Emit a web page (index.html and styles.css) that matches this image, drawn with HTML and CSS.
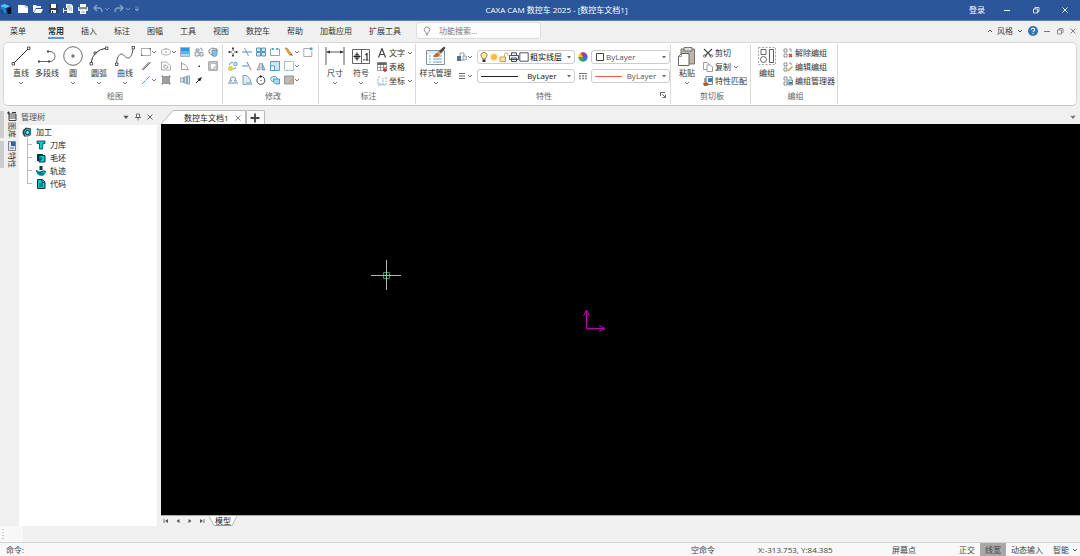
FILE: index.html
```html
<!DOCTYPE html>
<html lang="en">
<head>
<meta charset="utf-8">
<title>CAXA CAM 数控车 2025</title>
<link rel="stylesheet" href="styles.css">
</head>
<body>
<svg class="defs" aria-hidden="true">
  <symbol id="chev" viewBox="0 0 6 6"><path d="M1 2l2 2 2-2" fill="none" stroke="currentColor" stroke-width=".9"/></symbol>
  <symbol id="tri" viewBox="0 0 6 6"><path d="M1 2h4L3 4.500z" fill="currentColor"/></symbol>
  <symbol id="min" viewBox="0 0 8 8"><path d="M1 4.500h6" stroke="currentColor"/></symbol>
  <symbol id="restore" viewBox="0 0 8 8"><path d="M1.500 3h4v4h-4zM3 3V1.500h4v4H5.500" fill="none" stroke="currentColor" stroke-width=".8"/></symbol>
  <symbol id="close" viewBox="0 0 8 8"><path d="M1.500 1.500l5 5M6.500 1.500l-5 5" stroke="currentColor" stroke-width=".9"/></symbol>
</svg>

<header class="titlebar">
  <div class="quick">
    <svg class="i12" viewBox="0 0 12 12"><path d="M1 1h8l3 3v7H1z" fill="#174a86"/><path d="M1 2l4-1 5 2-4 2-5-1z" fill="#55c1ff"/><path d="M1 4l5 2v5l-2-1-1-3-2-1z" fill="#1e86d8"/><path d="M7 6l4-2v7H8z" fill="#06101f"/></svg>
    <button class="first" aria-label="新建"><svg class="i12" viewBox="0 0 12 12"><path d="M1 2h7l3 2v6H1z" fill="#fff"/><path d="M8 2v2h3" fill="none" stroke="#9fb4d6"/></svg></button>
    <button aria-label="打开"><svg class="i12" viewBox="0 0 12 12"><path d="M1 9V2h3l1 1h4v2H4L2 9z" fill="#eef3fa"/><path d="M2 10l2-4h7L9 10z" fill="#fff"/></svg></button>
    <button aria-label="保存"><svg class="i12" viewBox="0 0 12 12"><path d="M2 1h9v9H2z" fill="#333d4d"/><path d="M4 1h5v4H4z" fill="#fff"/><path d="M4 7h5v3H4z" fill="#e7eaf0"/><path d="M5 8h1v2H5z" fill="#333"/></svg></button>
    <button aria-label="另存为"><svg class="i12" viewBox="0 0 12 12"><path d="M4 1h5l2 2v7H4z" fill="#fff"/><path d="M5 3h4M5 5h5M7 7h3" stroke="#5d7fae" stroke-width=".7"/><path d="M1 5h5v5H1z" fill="#dfe8f5"/><path d="M2 5h3v2H2zM2 8h3v2H2z" fill="#40566f"/></svg></button>
    <button aria-label="打印"><svg class="i12" viewBox="0 0 12 12"><path d="M3 1h6v3H3z" fill="#fff"/><path d="M1 4h10v4H1z" fill="#d5dce6"/><path d="M2 5h8" stroke="#344"/><path d="M3 7h6v4H3z" fill="#fff"/><path d="M4 9h4" stroke="#6cb0c0"/></svg></button>
    <button class="dim" aria-label="撤销"><svg class="i12" viewBox="0 0 12 12"><path d="M5 2L2 5l3 3M2 5h5q3 0 3 4" fill="none" stroke="currentColor" stroke-width="1.500"/></svg><svg class="i6"><use href="#chev"/></svg></button>
    <button class="dim" aria-label="重做"><svg class="i12" viewBox="0 0 12 12"><path d="M7 2l3 3-3 3M10 5H5Q2 5 2 9" fill="none" stroke="currentColor" stroke-width="1.500"/></svg><svg class="i6"><use href="#chev"/></svg></button>
    <button class="dim" aria-label="自定义"><svg class="i6" viewBox="0 0 6 6"><path d="M1 1h4M1 3h4L3 5z" fill="currentColor" stroke="currentColor" stroke-width=".6"/></svg></button>
  </div>
  <h1>CAXA CAM 数控车 2025 - [数控车文档1]</h1>
  <div class="window-buttons">
    <button>登录</button>
    <button aria-label="最小化"><svg class="i8"><use href="#min"/></svg></button>
    <button aria-label="还原"><svg class="i8"><use href="#restore"/></svg></button>
    <button aria-label="关闭"><svg class="i8"><use href="#close"/></svg></button>
  </div>
</header>

<nav class="menubar">
  <button class="menu-root">菜单</button>
  <div class="tabs">
    <button class="on">常用</button><button>插入</button><button>标注</button><button>图幅</button><button>工具</button><button>视图</button><button>数控车</button><button>帮助</button><button>加载应用</button><button>扩展工具</button>
  </div>
  <label class="search">
    <svg class="i10" viewBox="0 0 10 10"><path d="M4 7.500Q4 6.500 3 5.500a2.700 2.700 0 1 1 4 0Q6 6.500 6 7.500zM4 9h2" fill="none" stroke="#666" stroke-width=".7"/></svg>
    <input type="text" placeholder="功能搜索..." aria-label="功能搜索">
  </label>
  <div class="doc-buttons">
    <button class="style-btn"><svg class="i6" viewBox="0 0 6 6"><path d="M1 4l2-2 2 2" fill="none" stroke="currentColor" stroke-width=".8"/></svg><span>风格</span><svg class="i6"><use href="#chev"/></svg></button>
    <button aria-label="帮助"><svg class="i10" viewBox="0 0 10 10"><circle cx="5" cy="5" r="5" fill="#3273b4"/><path d="M3.400 3.800a1.600 1.500 0 1 1 2.400 1.200Q5 5.400 5 6.200M5 7.200v1" fill="none" stroke="#fff" stroke-width="1.100"/></svg></button>
    <button aria-label="最小化文档"><svg class="i8"><use href="#min"/></svg></button>
    <button aria-label="还原文档"><svg class="i8"><use href="#restore"/></svg></button>
    <button aria-label="关闭文档"><svg class="i8"><use href="#close"/></svg></button>
  </div>
</nav>

<section class="ribbon">
  <section class="group g-draw">
    <div class="tools">
      <button class="big"><svg class="i20" viewBox="0 0 20 20"><path d="M2 18L18 2" stroke="#333"/><path d="M1 16.500h2.500V19H1zM16.500 1H19v2.500h-2.500z" fill="#fff" stroke="#333" stroke-width=".8"/></svg><span>直线</span><svg class="i6"><use href="#chev"/></svg></button>
      <button class="big"><svg class="i20" viewBox="0 0 20 20"><path d="M2 15.500h11a5 5 0 0 0 0-10h-3" fill="none" stroke="#555" stroke-width=".9"/><path d="M1 14.500h2v2H1zM11 14.500h2v2h-2zM10 4.500h2v2h-2z" fill="#444"/></svg><span>多段线</span></button>
      <button class="big"><svg class="i20" viewBox="0 0 20 20"><circle cx="10" cy="10" r="9.300" fill="none" stroke="#555" stroke-width=".9"/><path d="M9 9h2v2H9z" fill="#fff" stroke="#333" stroke-width=".8"/></svg><span>圆</span><svg class="i6"><use href="#chev"/></svg></button>
      <button class="big"><svg class="i20" viewBox="0 0 20 20"><path d="M2 18Q3 4 18 2" fill="none" stroke="#333"/><path d="M1 16.500h2.500V19H1zM16.500 1H19v2.500h-2.500zM5 6h2v2H5z" fill="#fff" stroke="#333" stroke-width=".8"/></svg><span>圆弧</span><svg class="i6"><use href="#chev"/></svg></button>
      <button class="big"><svg class="i20" viewBox="0 0 20 20"><path d="M1.500 18C2 9 6 6 9 9.500s8 5 9-7.500" fill="none" stroke="#444" stroke-width=".9"/><path d="M.5 17H3v2.500H.5zM17 .5h2.500V3H17z" fill="#fff" stroke="#333" stroke-width=".8"/></svg><span>曲线</span><svg class="i6"><use href="#chev"/></svg></button>
      <div class="grid grid-draw">
        <button aria-label="矩形"><svg class="i10" viewBox="0 0 10 10"><path d="M.5 1.500h9v7h-9z" fill="none" stroke="#888" stroke-width=".7"/><path d="M0 7.500h1.500V9H0zM8.500 1H10v1.500H8.500z" fill="#666"/></svg><svg class="i6"><use href="#chev"/></svg></button>
        <button aria-label="椭圆"><svg class="i10" viewBox="0 0 10 10"><ellipse cx="5" cy="5" rx="4.500" ry="3" fill="none" stroke="#888" stroke-width=".7"/><path d="M4.300 4.300h1.400v1.400H4.300zM4.300 1.300h1.400v1H4.300z" fill="#999"/></svg><svg class="i6"><use href="#chev"/></svg></button>
        <button aria-label="填充"><svg class="i10" viewBox="0 0 10 10"><path d="M1 1h8v3H1z" fill="#2f93e0"/><path d="M1 4h8v3H1z" fill="#5db2f0"/><path d="M1 7h8v2H1z" fill="#a6d8fb"/><path d="M.5.500h9v9h-9z" fill="none" stroke="#777" stroke-width=".6"/></svg></button>
        <button aria-label="块"><svg class="i10" viewBox="0 0 10 10"><path d="M1 5h4v4H1zM6 5l3 1v3H6zM2 2h3v2H2zM6 1l2 1v2" fill="#e8eff5" stroke="#78838d" stroke-width=".8"/></svg></button>
        <button aria-label="圆角多边形"><svg class="i10" viewBox="0 0 10 10"><path d="M1 3l3-2 5 1v3L5 9 1 6z" fill="#eee" stroke="#666" stroke-width=".7"/><path d="M4 3h5v4a2.500 2.500 0 0 1-5 0z" fill="#80bfe8" stroke="#4683a9" stroke-width=".6"/></svg></button>
        <button aria-label="平行线"><svg class="i10" viewBox="0 0 10 10"><path d="M1 8.500L8.500 1M2 9l7.500-7.500" stroke="#555" stroke-width=".9"/></svg></button>
        <button aria-label="等距线"><svg class="i10" viewBox="0 0 10 10"><path d="M.5 1h5l4 4v4h-9zM3 7V4h2l2 2v1z" fill="none" stroke="#888" stroke-width=".7"/></svg></button>
        <button aria-label="公式曲线"><svg class="i10" viewBox="0 0 10 10"><path d="M1.500 1v7.500H9M1.500 3Q6 2 8 8" fill="none" stroke="#777" stroke-width=".7"/></svg></button>
        <button aria-label="点"><svg class="i10" viewBox="0 0 10 10"><path d="M4.500 4.500H6V6H4.500z" fill="#333"/></svg></button>
        <button aria-label="轮廓"><svg class="i10" viewBox="0 0 10 10"><path d="M.8.800h8.400v8.400H.8z" fill="#e7e7e7" stroke="#888"/><path d="M2.500 2.500h5.500V6H6v2H2.500z" fill="#fff" stroke="#999" stroke-width=".6"/></svg></button>
        <button aria-label="中心线"><svg class="i10" viewBox="0 0 10 10"><path d="M1 9l8-8" stroke="#29a8dc" stroke-dasharray="5 1"/></svg><svg class="i6"><use href="#chev"/></svg></button>
        <button aria-label="剖面线"><svg class="i10" viewBox="0 0 10 10"><path d="M1.500 1.500h7v7h-7z" fill="#9aa0a6"/><path d="M0 1.500h10M0 8.500h10M1.500 0v10M8.500 0v10" stroke="#777" stroke-width=".6"/></svg></button>
        <button aria-label="孔轴"><svg class="i10" viewBox="0 0 10 10"><path d="M0 3h4v4H0zM4 2h3v6H4zM7 1h2.500v8H7z" fill="#d6e7f3" stroke="#667f91" stroke-width=".7"/></svg></button>
        <button aria-label="箭头"><svg class="i10" viewBox="0 0 10 10"><path d="M2 8l3-3" stroke="#222"/><path d="M8 2L3.500 4l2.500 2.500z" fill="#222"/></svg></button>
      </div>
    </div>
    <h2>绘图</h2>
  </section>

  <section class="group g-edit">
    <div class="tools">
      <div class="grid grid-edit">
        <button aria-label="移动"><svg class="i10" viewBox="0 0 10 10"><path d="M5 0v4M5 6v4M0 5h4M6 5h4M4 1.500h2M4 8.500h2M1.500 4v2M8.500 4v2" stroke="#333" stroke-width=".9"/></svg></button>
        <button aria-label="裁剪"><svg class="i10" viewBox="0 0 10 10"><path d="M0 5h10" stroke="#3697d5"/><path d="M2.500 1l4 8" stroke="#777" stroke-width=".8"/></svg></button>
        <button aria-label="阵列"><svg class="i10" viewBox="0 0 10 10"><path d="M.5 1h4v3.500h-4zM5.500 1h4v3.500h-4zM.5 5.500h4V9h-4zM5.500 5.500h4V9h-4z" fill="#cfeafa" stroke="#347ba8" stroke-width=".8"/></svg></button>
        <button aria-label="打断"><svg class="i10" viewBox="0 0 10 10"><path d="M3 2H.5v6.500h9V2H7" fill="none" stroke="#777" stroke-width=".7"/><path d="M2 2h2M6 2h2" stroke="#2c9bd8" stroke-width="1.500"/></svg></button>
        <button aria-label="删除"><svg class="i10" viewBox="0 0 10 10"><path d="M1 1l2 0 4.500 5.500-2 1.500z" fill="#eca53a" stroke="#a46b22" stroke-width=".5"/><path d="M5.500 8l2-1.500L9 9z" fill="#c43b3b"/></svg><svg class="i6"><use href="#chev"/></svg></button>
        <button aria-label="编辑"><svg class="i10" viewBox="0 0 10 10"><path d="M7 1.500H.800v8h8V4" fill="none" stroke="#888" stroke-width=".7"/><path d="M7 .500h2.500V3H7z" fill="#4b9fd3"/></svg></button>
        <button aria-label="平移复制"><svg class="i10" viewBox="0 0 10 10"><circle cx="2.500" cy="7.500" r="1.900" fill="#ffe600" stroke="#9b8b00" stroke-width=".5"/><circle cx="7.500" cy="3" r="1.800" fill="#d0e8f5" stroke="#357fae" stroke-width=".7"/><path d="M1 4Q2 1 5 1.500M5 8l3-1" fill="none" stroke="#2384c0" stroke-width=".8"/></svg></button>
        <button aria-label="延伸"><svg class="i10" viewBox="0 0 10 10"><path d="M0 5h6" stroke="#3697d5"/><path d="M5 1l4 8" stroke="#555" stroke-width=".8"/></svg></button>
        <button aria-label="镜像"><svg class="i10" viewBox="0 0 10 10"><path d="M4 2v7H1z" fill="#ddd" stroke="#777" stroke-width=".6"/><path d="M6 2v7h3z" fill="#8ecbee" stroke="#43718d" stroke-width=".6"/></svg></button>
        <button aria-label="缩放"><svg class="i10" viewBox="0 0 10 10"><path d="M.5.500h9v9h-9z" fill="#c6e8fa" stroke="#3a86b5" stroke-width=".8"/><path d="M.5 5h4v4.500h-4z" fill="#fff" stroke="#3a86b5" stroke-width=".8"/></svg></button>
        <button aria-label="拉伸"><svg class="i10" viewBox="0 0 10 10"><path d="M.5.500h9v9h-9z" fill="none" stroke="#5b9fc5" stroke-width=".8" stroke-dasharray="2 .6"/></svg><svg class="i6"><use href="#chev"/></svg></button>
        <span></span>
        <button aria-label="等距"><svg class="i10" viewBox="0 0 10 10"><path d="M0 8h10M1 6h2.500Q1 2 5 2t1.500 4H9" fill="none" stroke="#4f7f9e" stroke-width=".9"/></svg></button>
        <button aria-label="倒角"><svg class="i10" viewBox="0 0 10 10"><path d="M1 .5h4L8.500 5v4.500H1z" fill="#dcebf4" stroke="#678" stroke-width=".7"/><path d="M4 7h6v3H4z" fill="#8ec9ea"/></svg></button>
        <button aria-label="旋转"><svg class="i10" viewBox="0 0 10 10"><path d="M4 1.500a4 4 0 1 0 3 .5" fill="none" stroke="#333" stroke-width=".9"/><path d="M4 0l3 1.500L4 3zM4.500 5h1v1h-1z" fill="#333"/></svg></button>
        <button aria-label="组合"><svg class="i10" viewBox="0 0 10 10"><path d="M.5 4.500q0-3 3-3h2l2 2v3h-5z" fill="#d9effa" stroke="#3a86b5" stroke-width=".8"/><path d="M3.500 4h6v5h-4l-2-2z" fill="#a9d9f3" stroke="#3a86b5" stroke-width=".8"/></svg></button>
        <button aria-label="特性编辑"><svg class="i10" viewBox="0 0 10 10"><path d="M.5 1h9v8h-9z" fill="#b9bdc0" stroke="#777" stroke-width=".7"/><path d="M5 7.500l4.500-4.500" stroke="#dca54a" stroke-width="1.200"/></svg><svg class="i6"><use href="#chev"/></svg></button>
      </div>
    </div>
    <h2>修改</h2>
  </section>

  <section class="group g-dim">
    <div class="tools">
      <button class="big"><svg class="i20" viewBox="0 0 20 20"><path d="M1 1v18M19 1v18M2 6h16" stroke="#444" stroke-width=".9"/><path d="M1 6l4-1.500v3zM19 6l-4-1.500v3z" fill="#333"/></svg><span>尺寸</span><svg class="i6"><use href="#chev"/></svg></button>
      <button class="big"><svg class="i20" viewBox="0 0 20 20"><path d="M1.500 3.500h17v14h-17zM10.500 3.500v14" fill="#fff" stroke="#555" stroke-width=".9"/><circle cx="6" cy="10.500" r="2.300" fill="none" stroke="#333"/><path d="M6 6.500v8M2.500 10.500h7M13 13v1.500M16 7v7.500M16 7.500L14.500 9M14.500 14h3" stroke="#222" stroke-width="1.100"/></svg><span>符号</span><svg class="i6"><use href="#chev"/></svg></button>
      <div class="stack">
        <button><svg class="i10" viewBox="0 0 10 10"><path d="M1.500 9.500L5 .500l3.500 9M3 6.500h4" fill="none" stroke="#444" stroke-width="1.200"/></svg><span>文字</span><svg class="i6"><use href="#chev"/></svg></button>
        <button><svg class="i10" viewBox="0 0 10 10"><path d="M.5.500h9v8h-9zM.5 5.500h9M3.500 2v6M6.500 2v6" fill="none" stroke="#777" stroke-width=".7"/><path d="M.5.500h9v2.500h-9z" fill="#666"/><path d="M6 8h4M8 6v4" stroke="#cf2638" stroke-width="1.400"/></svg><span>表格</span></button>
        <button><svg class="i10" viewBox="0 0 10 10"><path d="M1 3v6h8V5M3 9V6M6 9V2M9 1v2M1 1h2" fill="none" stroke="#6b9ab8" stroke-width=".8" stroke-dasharray="2 .8"/></svg><span>坐标</span><svg class="i6"><use href="#chev"/></svg></button>
      </div>
    </div>
    <h2>标注</h2>
  </section>

  <section class="group g-prop">
    <div class="tools">
      <button class="big wide"><svg class="i20" viewBox="0 0 20 20"><path d="M.5 4.500h18v14H.5z" fill="#fff" stroke="#7b94a8"/><path d="M1 5h17v3H1z" fill="#dfe9f1"/><path d="M3 10h2M7 10h9M3 13h2M7 13h9M3 16h2M7 16h9" stroke="#6d9fc2"/><path d="M11 7l7-6.500 1.500 1.500L13.500 9z" fill="#4a4440"/><path d="M11 7l2-2 2.500 2.500L13.500 9z" fill="#d8a060"/><path d="M7.500 11q1-4 4-4l2 2q-1.500 3-6 2z" fill="#c4671d"/></svg><span>样式管理</span><svg class="i6"><use href="#chev"/></svg></button>
      <div class="props">
        <button aria-label="图层"><svg class="i10" viewBox="0 0 10 10"><path d="M3 1h4v7H3z" fill="#fff" stroke="#777" stroke-width=".7"/><path d="M0 4h4v5H0z" fill="#54758e"/><path d="M6 4h3.500v4H6z" fill="#d9e6ee" stroke="#789" stroke-width=".6"/></svg><svg class="i6"><use href="#chev"/></svg></button>
        <label class="combo">
          <svg class="i10" viewBox="0 0 10 10"><path d="M3.500 7Q3.500 6 2.500 5a3 3 0 1 1 5 0Q6.500 6 6.500 7z" fill="#ffe9a0" stroke="#6b5820" stroke-width=".7"/><path d="M3.500 7.500h3V10h-3z" fill="#333"/></svg>
          <svg class="i10" viewBox="0 0 10 10"><circle cx="5" cy="5" r="3" fill="#f9b93c"/><circle cx="5" cy="5" r="4" fill="none" stroke="#fbd48a" stroke-dasharray="1.500 1"/></svg>
          <svg class="i10" viewBox="0 0 10 10"><path d="M1 5h5.500v4.500H1z" fill="#fbe1a3" stroke="#c08b2c" stroke-width=".8"/><path d="M5.500 5V2.500a1.700 1.700 0 0 1 3.400 0V4" fill="none" stroke="#c9a04d" stroke-width=".9"/></svg>
          <svg class="i10" viewBox="0 0 10 10"><path d="M2.500 3V.800h5V3M.5 3.500h9v4h-9zM2.500 6h5v3.500h-5z" fill="#f2f4f8" stroke="#333c50" stroke-width=".9"/></svg>
          <svg class="i10" viewBox="0 0 10 10"><path d="M.8.800h8.400v8.400H.8z" fill="#fff" stroke="#444" stroke-width=".9"/></svg>
          <select aria-label="图层"><option>粗实线层</option></select>
          <svg class="i6"><use href="#tri"/></svg>
        </label>
        <svg class="i10" viewBox="0 0 10 10"><path d="M5 5V.300A4.700 4.700 0 0 1 9.700 5z" fill="#8a3fd0"/><path d="M5 5h4.700A4.700 4.700 0 0 1 5 9.700z" fill="#2f7be5"/><path d="M5 5v4.700A4.700 4.700 0 0 1 .3 5z" fill="#36b04a"/><path d="M5 5H.300A4.700 4.700 0 0 1 2.500 1z" fill="#f6c11e"/><path d="M5 5L2.500 1A4.700 4.700 0 0 1 6 .400z" fill="#e3312b"/></svg>
        <label class="combo light">
          <svg class="i10" viewBox="0 0 10 10"><path d="M1.500 1.500h7v7h-7z" fill="#fff" stroke="#444"/></svg>
          <select aria-label="颜色"><option>ByLayer</option></select>
          <svg class="i6"><use href="#tri"/></svg>
        </label>
        <button aria-label="线型"><svg class="i10" viewBox="0 0 10 10"><path d="M2 2.500h6M2 5h6M2 7.500h6" stroke="#555" stroke-width=".9"/></svg><svg class="i6"><use href="#chev"/></svg></button>
        <label class="combo">
          <span class="line"></span>
          <select aria-label="线型"><option>ByLayer</option></select>
          <svg class="i6"><use href="#tri"/></svg>
        </label>
        <svg class="i10" viewBox="0 0 10 10"><path d="M1 2.500h8" stroke="#777"/><path d="M1 5h8M1 7.500h8" stroke="#888" stroke-width="1.500" stroke-dasharray="2 1"/></svg>
        <label class="combo light">
          <span class="line red"></span>
          <select aria-label="线宽"><option>ByLayer</option></select>
          <svg class="i6"><use href="#tri"/></svg>
        </label>
      </div>
    </div>
    <h2>特性</h2>
    <button class="launcher" aria-label="特性设置"><svg class="i6" viewBox="0 0 6 6"><path d="M.5 4V.500H5M2 2l3 3M5.500 2.500v3h-3" fill="none" stroke="#444" stroke-width=".8"/></svg></button>
  </section>

  <section class="group g-clip">
    <div class="tools">
      <button class="big"><svg class="i20" viewBox="0 0 20 20"><path d="M4 3h13.500v15H4z" fill="#c0b5a7" stroke="#666" stroke-width=".9"/><path d="M7 1.500h8V5H7z" fill="#ddd" stroke="#666" stroke-width=".9"/><path d="M1.500 10.500L4.500 7.500H12v12H1.500z" fill="#fff" stroke="#555" stroke-width=".9"/><path d="M1.500 10.500h3v-3" fill="none" stroke="#666" stroke-width=".7"/></svg><span>粘贴</span><svg class="i6"><use href="#chev"/></svg></button>
      <div class="stack">
        <button><svg class="i10" viewBox="0 0 10 10"><path d="M1 1l7 7M9 1L2 8" stroke="#444" stroke-width="1.100"/><circle cx="1.800" cy="8" r="1.300" fill="none" stroke="#555" stroke-width=".8"/><circle cx="8.200" cy="8" r="1.300" fill="none" stroke="#555" stroke-width=".8"/></svg><span>剪切</span></button>
        <button><svg class="i10" viewBox="0 0 10 10"><path d="M.5.500h4L6 2v5.500H.500z" fill="#fff" stroke="#777" stroke-width=".7"/><path d="M4 3h3.500L9.500 5v4.500H4z" fill="#fff" stroke="#777" stroke-width=".7"/></svg><span>复制</span><svg class="i6"><use href="#chev"/></svg></button>
        <button><svg class="i10" viewBox="0 0 10 10"><path d="M3 .500h6.500v8H3z" fill="#eaf3fa" stroke="#567" stroke-width=".8"/><path d="M5 2h4v4H5z" fill="#3d87bd"/><path d="M0 7l3-1 3 2-2 2H1z" fill="#b45b24"/><path d="M1 3h2M1 5h2" stroke="#555"/></svg><span>特性匹配</span></button>
      </div>
    </div>
    <h2>剪切板</h2>
  </section>

  <section class="group g-group">
    <div class="tools">
      <button class="big"><svg class="i20" viewBox="0 0 20 20"><path d="M1.500 1.500h17v17h-17z" fill="none" stroke="#999" stroke-width=".9" stroke-dasharray="2 1.500"/><path d="M4 3.500h5v5H4zM12.500 3.500h4v13h-4z" fill="#fff" stroke="#555" stroke-width=".9"/><circle cx="6.500" cy="13.500" r="3" fill="#fff" stroke="#555" stroke-width=".9"/></svg><span>编组</span></button>
      <div class="stack">
        <button><svg class="i10" viewBox="0 0 10 10"><path d="M1 1h3v3H1zM1 6h3v3H1zM6 1h2v3" fill="none" stroke="#777" stroke-width=".8"/><path d="M6 6l3 3M9 6L6 9" stroke="#cc3030" stroke-width="1.200"/></svg><span>解除编组</span></button>
        <button><svg class="i10" viewBox="0 0 10 10"><path d="M1 1h3v3H1zM1 6h3v3H1zM6 1h2v2" fill="none" stroke="#777" stroke-width=".8"/><path d="M5 9l4.500-4.500" stroke="#d89a38" stroke-width="1.500"/></svg><span>编辑编组</span></button>
        <button><svg class="i10" viewBox="0 0 10 10"><path d="M1 1h3v3H1zM1 6h3v3H1zM6 1h2v2" fill="none" stroke="#777" stroke-width=".8"/><path d="M5 4h4.500v5H5z" fill="#d8ecf8" stroke="#467" stroke-width=".7"/><path d="M6 6h3v2H6z" fill="#3677a8"/></svg><span>编组管理器</span></button>
      </div>
    </div>
    <h2>编组</h2>
  </section>
</section>

<main class="work">
  <aside class="side-tabs">
    <button><svg class="i10" viewBox="0 0 10 10"><path d="M2 3h7v6.500H2zM2 5h7M2 7h7" fill="#fff" stroke="#444"/><path d="M0 2h3M1.500.500v3M5 1.500h4" stroke="#333"/></svg><span>图库</span></button>
    <button><svg class="i10" viewBox="0 0 10 10"><path d="M1.500.500h7v9h-7z" fill="#dfe8f2" stroke="#667" stroke-width=".8"/><path d="M4 1h4v4H4z" fill="#2b62a8"/><path d="M3 7h4" stroke="#667"/></svg><span>特性</span></button>
  </aside>
  <section class="panel">
    <header class="panel-head">
      <h2>管理树</h2>
      <button aria-label="菜单"><svg class="i8"><use href="#tri"/></svg></button>
      <button aria-label="固定"><svg class="i8" viewBox="0 0 8 8"><path d="M2.500 1h3v3.500h-3zM1 4.500h6M4 4.500v3" fill="none" stroke="#555" stroke-width=".8"/></svg></button>
      <button aria-label="关闭面板"><svg class="i8"><use href="#close"/></svg></button>
    </header>
    <div class="tree">
      <div class="root"><svg class="i10" viewBox="0 0 10 10"><path d="M1 3l3-2.500 5 1V8L6 9.500H2L.500 6z" fill="#263c40"/><path d="M2 4l3-2.500 3.500 1V7.500L6 9H3z" fill="#1fb9bd"/><circle cx="5.500" cy="5.500" r="2" fill="#7feaea" stroke="#123" stroke-width=".9"/></svg><span>加工</span></div>
      <ul>
        <li><svg class="i10" viewBox="0 0 10 10"><path d="M1 1h8v2.500H7L6.500 9h-3L3.500 3.500H1z" fill="#0cc" stroke="#134" stroke-width=".8"/></svg><span>刀库</span></li>
        <li><svg class="i10" viewBox="0 0 10 10"><path d="M1 1h6v7H1z" fill="#134"/><path d="M3 2.500h6V9H3z" fill="#0cc" stroke="#134"/><path d="M5 4v3H3" fill="none" stroke="#134"/></svg><span>毛坯</span></li>
        <li><svg class="i10" viewBox="0 0 10 10"><path d="M3.500 0h3v4h-3z" fill="#134"/><path d="M0 4l3 1h6l1 2-3 3H4L1 8z" fill="#0bb"/><path d="M0 4q2 5 5 2t5 0M3 8h5" fill="none" stroke="#134" stroke-width=".9"/></svg><span>轨迹</span></li>
        <li><svg class="i10" viewBox="0 0 10 10"><path d="M1.500.500h5l2.500 2.500v6.500H1.500z" fill="#0cc" stroke="#134"/><path d="M3 5h4M3 7h4M6 1v2.500h2.500" fill="none" stroke="#134" stroke-width=".9"/></svg><span>代码</span></li>
      </ul>
    </div>
  </section>
  <section class="document">
    <div class="doc-tabs">
      <svg class="slope" viewBox="0 0 14 14"><path d="M0 14L12 .500h2V14z" fill="#fff"/><path d="M0 14L12 .500h2" fill="none" stroke="#aaa" stroke-width=".8"/></svg>
      <div class="doc-tab"><button>数控车文档1</button><button class="x" aria-label="关闭标签"><svg class="i8"><use href="#close"/></svg></button></div>
      <button class="add" aria-label="新建标签"><svg class="i10" viewBox="0 0 10 10"><path d="M5 .500v9M.5 5h9" stroke="#444" stroke-width="1.800"/></svg></button>
      <button class="tab-list" aria-label="标签列表"><svg class="i8"><use href="#tri"/></svg></button>
    </div>
    <div class="canvas">
      <svg class="cursor" viewBox="0 0 30 30"><path d="M12.500 12.500h6v6h-6z" fill="none" stroke="#00a65a"/><path d="M0 15.500h30M15.500 0v30" stroke="#b5b5b5"/></svg>
      <svg class="axes" viewBox="0 0 24 24"><path d="M3.500 2v18.500H22M.5 8l3-6 3 6M16 17.500l6 3-6 3" fill="none" stroke="#c000c0"/></svg>
    </div>
    <div class="sheet-bar">
      <button aria-label="首页"><svg class="i6" viewBox="0 0 6 6"><path d="M5 1v4L2 3z" fill="#555"/><path d="M1 1v4" stroke="#555" stroke-width=".8"/></svg></button>
      <button aria-label="上一页"><svg class="i6" viewBox="0 0 6 6"><path d="M4.500 1v4L1.500 3z" fill="#555"/></svg></button>
      <button aria-label="下一页"><svg class="i6" viewBox="0 0 6 6"><path d="M1.500 1v4l3-2z" fill="#555"/></svg></button>
      <button aria-label="末页"><svg class="i6" viewBox="0 0 6 6"><path d="M1 1v4l3-2z" fill="#555"/><path d="M5 1v4" stroke="#555" stroke-width=".8"/></svg></button>
      <div class="sheet"><svg viewBox="0 0 6 10"><path d="M0 0h6v9.500H5z" fill="#fff"/><path d="M0 0l5 9.500h1" fill="none" stroke="#999" stroke-width=".7"/></svg><button>模型</button><svg viewBox="0 0 6 10"><path d="M6 0H0v9.500h1z" fill="#fff"/><path d="M6 0L1 9.500H0" fill="none" stroke="#999" stroke-width=".7"/></svg></div>
    </div>
  </section>
</main>

<div class="dock"><div class="handle"><svg viewBox="0 0 2 10"><path d="M1 0v10" stroke="#999" stroke-dasharray="1 2"/></svg></div></div>
<footer class="status">
  <label class="command">命令:<input type="text" aria-label="命令输入"></label>
  <span class="state">空命令</span>
  <span class="coords">X:-313.753, Y:84.385</span>
  <span class="snap">屏幕点</span>
  <button>正交</button>
  <button class="on">线宽</button>
  <button>动态输入</button>
  <button>智能 <svg class="i6"><use href="#chev"/></svg></button>
</footer>
</body>
</html>
```
FILE: styles.css
```css
* { box-sizing: border-box; }
body {
  margin: 0;
  min-height: 100vh;
  display: flex;
  flex-direction: column;
  background: #f0f0f0;
  color: #333;
  font: 8px/10px "Open Sans", "Noto Sans CJK SC", sans-serif;
}
button, input, select {
  font: inherit;
  color: inherit;
  background: none;
  border: 0;
  padding: 0;
  margin: 0;
  white-space: nowrap;
}
button { display: flex; align-items: center; justify-content: center; }
h1, h2 { margin: 0; font: inherit; }
svg { flex: none; display: block; }
.defs { width: 0; height: 0; position: absolute; }
.i6 { width: 6px; height: 6px; }
.i8 { width: 8px; height: 8px; }
.i10 { width: 10px; height: 10px; }
.i12 { width: 12px; height: 12px; }
.i20 { width: 20px; height: 20px; }

/* title bar */
.titlebar {
  display: grid;
  grid-template-columns: 1fr auto 1fr;
  align-items: center;
  height: 21px;
  background: #2b579a;
  border-bottom: 1px solid #5d7fb2;
  color: #fff;
}
.titlebar h1 { padding-left: 33px; }
.quick { display: flex; align-items: center; gap: 3px; padding-bottom: 3px; }
.quick .first { margin-left: 2px; }
.dim { color: #7f9ecb; }
.window-buttons { display: flex; justify-content: flex-end; align-items: center; gap: 21px; padding-right: 11px; }
.window-buttons button:first-child { margin-right: -3px; }

/* menu bar */
.menubar { display: flex; align-items: center; height: 21px; padding: 0 3px 2px 10px; }
.menu-root { margin-right: 14px; }
.tabs { display: flex; align-items: stretch; gap: 1px; }
.tabs button { height: 17px; padding: 0 8px; }
.tabs .on { background: linear-gradient(#5b97da, #5b97da) center bottom / 16px 2px no-repeat; font-weight: bold; }
.search {
  display: flex;
  align-items: center;
  gap: 7px;
  width: 125px;
  height: 17px;
  margin-left: 7px;
  padding-left: 5px;
  background: #fcfcfc;
  border: 1px solid #ddd;
  border-radius: 3px;
}
.search input { flex: 1; min-width: 0; outline: 0; }
.search input::placeholder { color: #777; opacity: 1; }
.doc-buttons { margin-left: auto; display: flex; align-items: center; gap: 5px; color: #777; }
.style-btn { gap: 4px; color: #444; }

/* ribbon */
.ribbon {
  display: flex;
  height: 64px;
  margin: 0 3px;
  background: #fff;
  border: 1px solid #d8d8d8;
  border-bottom-color: #c8c8c8;
  border-radius: 5px;
}
.group {
  position: relative;
  display: flex;
  flex-direction: column;
  justify-content: space-between;
  margin: 1px 0;
  padding-bottom: 3px;
  border-right: 1px solid #d9d9d9;
}
.group h2 { text-align: center; color: #666; }
.tools { display: flex; padding-top: 2px; }
.big { flex-direction: column; justify-content: flex-start; width: 26px; }
.big > span { margin: 2px 0; }
.ribbon .i6 { color: #666; }
.big.wide { width: 36px; }
.g-draw { width: 219px; padding-left: 4px; }
.g-edit { width: 96px; padding-left: 5px; }
.g-dim { width: 97px; padding-left: 3px; }
.g-prop { width: 255px; padding-left: 2px; }
.g-clip { width: 80px; padding-left: 3px; }
.g-group { width: 87px; padding-left: 3px; }
.tools .grid { margin-top: -1px; }
.grid { display: grid; grid-auto-rows: 14px; }
.grid button { justify-content: flex-start; }
.grid-draw { grid-template-columns: 20px 19px 14px 14px 10px; margin-left: 3px; }
.grid-edit { grid-template-columns: 14px 14px 14px 14px 19px 10px; }
.stack { display: grid; grid-auto-rows: 14px; margin-left: 3px; }
.stack button { justify-content: flex-start; gap: 2px; }
.props {
  display: grid;
  grid-template-columns: 19px 98px 10px 79px;
  grid-auto-rows: 14px;
  row-gap: 5px;
  column-gap: 3px;
  align-items: center;
  padding: 4px 0 0 2px;
}
.combo {
  display: flex;
  align-items: center;
  height: 14px;
  padding: 0 2px 0 1px;
  border: 1px solid #ccc;
  border-radius: 3px;
  color: #111;
}
.combo.light { color: #555; padding-left: 3px; }
.combo select { flex: 1; min-width: 0; appearance: none; text-align: center; }
.combo .i10 + select { text-align: left; padding-left: 1px; }
.line { width: 37px; height: 1px; margin-left: 2px; background: #222; }
.line.red { width: 27px; margin: 0; background: #f55; }
.launcher { position: absolute; right: 4px; bottom: 6px; }

/* work area */
.work { flex: 1; display: flex; }
.side-tabs { width: 19px; padding-top: 5px; display: flex; flex-direction: column; gap: 3px; }
.side-tabs button {
  flex-direction: column;
  gap: 1px;
  width: 17px;
  padding-left: 2px;
  border-left: 4px solid #ccc;
}
.side-tabs span { writing-mode: vertical-rl; text-orientation: sideways; }
.panel { width: 138px; display: flex; flex-direction: column; }
.panel-head { display: flex; align-items: center; gap: 4px; height: 19px; padding: 3px 3px 0 2px; color: #555; }
.panel-head h2 { flex: 1; }
.tree { flex: 1; background: #fff; padding-left: 3px; }
.tree span { color: #222; }
.root, .tree li { display: flex; align-items: center; gap: 4px; height: 13px; }
.tree ul { list-style: none; margin: 0 0 0 5px; padding: 0; }
.tree li::before {
  content: "";
  width: 5px;
  height: 13px;
  background: linear-gradient(#bbb, #bbb) 0 0 / 1px 100% no-repeat, linear-gradient(#bbb, #bbb) 0 6px / 100% 1px no-repeat;
}
.tree li:last-child::before { background-size: 1px 7px, 100% 1px; }
.document { flex: 1; min-width: 0; margin-left: 4px; display: flex; flex-direction: column; }
.doc-tabs { display: flex; align-items: flex-end; height: 18px; }
.slope { width: 14px; height: 14px; }
.doc-tab {
  display: flex;
  align-items: center;
  gap: 5px;
  height: 14px;
  padding: 0 3px 0 9px;
  background: #fff;
  border: solid #bbb;
  border-width: 1px 1px 0 0;
  color: #222;
}
.x { color: #777; }
.add { width: 19px; height: 14px; background: #fafafa; border: 1px solid #bbb; border-bottom: 0; border-radius: 2px 2px 0 0; }
.tab-list { margin-left: auto; padding: 0 3px 3px 0; color: #777; }
.canvas { flex: 1; position: relative; background: #000; }
.cursor { position: absolute; left: 210px; top: 136px; width: 30px; height: 30px; }
.axes { position: absolute; left: 422px; top: 184px; width: 24px; height: 24px; }
.sheet-bar { display: flex; align-items: center; gap: 6px; height: 11px; padding-left: 2px; border-top: 1px solid #aaa; }
.sheet { display: flex; align-items: stretch; height: 10px; color: #222; margin-left: -2px; }
.sheet svg { width: 6px; height: 10px; }
.sheet button { background: #fff; border-bottom: 1px solid #999; }

/* command and status */
.dock { height: 16px; }
.handle { width: 23px; height: 16px; padding: 3px 2px; border-radius: 3px; background: #f8f8f8; }
.handle svg { width: 2px; height: 10px; }
.status {
  display: flex;
  align-items: center;
  height: 14px;
  padding: 0 2px 0 6px;
  background: #f8f8f8;
  border-top: 1px solid #d4d4d4;
  color: #444;
}
.status button { height: 13px; padding: 0 5px; }
.status .on { background: #a8a8a8; }
.command { flex: 1; display: flex; }
.command input { flex: 1; min-width: 0; outline: 0; }
.state { width: 67px; }
.coords { width: 134px; }
.snap { width: 62px; }
.status button:last-child { padding: 0 0 0 5px; gap: 3px; }
```
